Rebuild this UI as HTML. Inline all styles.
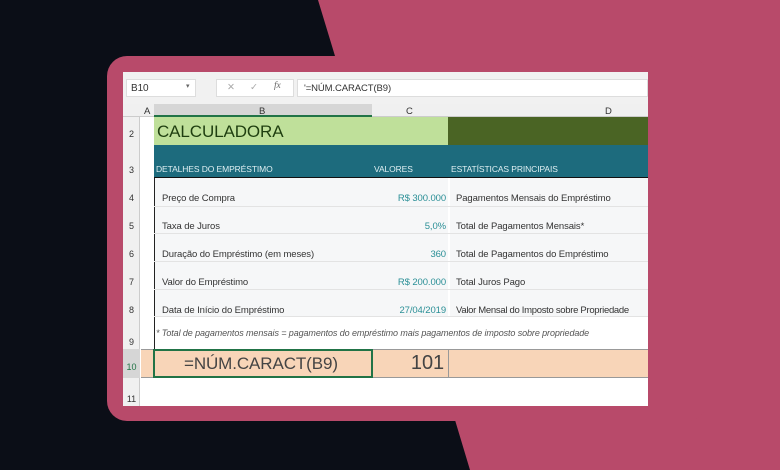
<!DOCTYPE html><html><head><meta charset="utf-8"><style>
*{margin:0;padding:0;box-sizing:border-box}
body{width:780px;height:470px;overflow:hidden;background:#0b0e17;position:relative;font-family:"Liberation Sans",sans-serif}
.a{position:absolute}
.t{position:absolute;font-size:9.5px;color:#333;white-space:nowrap;letter-spacing:-0.1px}
.n{text-align:right;color:#2a8f96}
.rn{position:absolute;left:123px;width:17px;font-size:9px;color:#333;text-align:center}
.hl{position:absolute;left:154px;width:494px;height:1px;background:#e3e3e3}
</style></head><body>
<svg class="a" style="left:0;top:0" width="780" height="470"><polygon points="318,0 780,0 780,470 470,470 455,420 335,56" fill="#b84a6a"/><rect x="107" y="56" width="600" height="365" rx="20" fill="#b84a6a"/></svg>
<div class="a" style="left:123px;top:72px;width:525px;height:334px;background:#fff"></div>
<div class="a" style="left:123px;top:72px;width:525px;height:32px;background:#f1f1f1"></div>
<div class="a" style="left:126px;top:79px;width:70px;height:18px;background:#fff;border:1px solid #ddd"></div>
<div class="t" style="left:131px;top:83px;font-size:10px">B10</div>
<div class="t" style="left:186px;top:82px;font-size:7px;color:#666">▾</div>
<div class="a" style="left:216px;top:79px;width:78px;height:18px;background:#fff;border:1px solid #ddd"></div>
<div class="t" style="left:227px;top:82px;color:#aaa">✕</div>
<div class="t" style="left:250px;top:82px;color:#aaa">✓</div>
<div class="t" style="left:274px;top:81px;color:#666;font-style:italic;font-family:'Liberation Serif',serif">fx</div>
<div class="a" style="left:297px;top:79px;width:351px;height:18px;background:#fff;border:1px solid #ddd"></div>
<div class="t" style="left:304px;top:83px">'=NÚM.CARACT(B9)</div>
<div class="a" style="left:123px;top:104px;width:525px;height:13px;background:#f0f0f0;border-bottom:1px solid #ccc"></div>
<div class="a" style="left:154px;top:104px;width:218px;height:13px;background:#d6d6d6;border-bottom:2px solid #217346"></div>
<div class="t" style="left:144px;top:106px">A</div>
<div class="t" style="left:259px;top:106px">B</div>
<div class="t" style="left:406px;top:106px">C</div>
<div class="t" style="left:605px;top:106px">D</div>
<div class="a" style="left:123px;top:117px;width:17px;height:289px;background:#f0f0f0;border-right:1px solid #ccc"></div>
<div class="a" style="left:123px;top:349px;width:17px;height:29px;background:#d6d6d6"></div>
<div class="a" style="left:154px;top:117px;width:1px;height:232px;background:#222"></div>
<div class="a" style="left:154px;top:117px;width:294px;height:28px;background:#bfe09a"></div>
<div class="a" style="left:448px;top:117px;width:200px;height:28px;background:#4a6424"></div>
<div class="t" style="left:157px;top:122px;font-size:17px;color:#1f3f10">CALCULADORA</div>
<div class="a" style="left:154px;top:145px;width:494px;height:33px;background:#1d6b7d;border-bottom:1px solid #111"></div>
<div class="t" style="left:156px;top:164px;font-size:8.5px;color:#dfeff2">DETALHES DO EMPRÉSTIMO</div>
<div class="t" style="left:374px;top:164px;font-size:8.5px;color:#dfeff2">VALORES</div>
<div class="t" style="left:451px;top:164px;font-size:8.5px;color:#dfeff2">ESTATÍSTICAS PRINCIPAIS</div>
<div class="a" style="left:155px;top:178px;width:493px;height:138px;background:#f6f7f8"></div>
<div class="a" style="left:448px;top:178px;width:2px;height:138px;background:#fff"></div>
<div class="hl" style="top:206px"></div><div class="hl" style="top:233px"></div><div class="hl" style="top:261px"></div><div class="hl" style="top:289px"></div><div class="hl" style="top:316px"></div>
<div class="t" style="left:162px;top:193px">Preço de Compra</div><div class="t n" style="left:372px;width:74px;top:193px">R$ 300.000</div><div class="t" style="left:456px;top:193px">Pagamentos Mensais do Empréstimo</div>
<div class="t" style="left:162px;top:221px">Taxa de Juros</div><div class="t n" style="left:372px;width:74px;top:221px">5,0%</div><div class="t" style="left:456px;top:221px">Total de Pagamentos Mensais*</div>
<div class="t" style="left:162px;top:249px">Duração do Empréstimo (em meses)</div><div class="t n" style="left:372px;width:74px;top:249px">360</div><div class="t" style="left:456px;top:249px">Total de Pagamentos do Empréstimo</div>
<div class="t" style="left:162px;top:277px">Valor do Empréstimo</div><div class="t n" style="left:372px;width:74px;top:277px">R$ 200.000</div><div class="t" style="left:456px;top:277px">Total Juros Pago</div>
<div class="t" style="left:162px;top:305px">Data de Início do Empréstimo</div><div class="t n" style="left:372px;width:74px;top:305px">27/04/2019</div><div class="t" style="left:456px;top:305px;letter-spacing:-0.3px">Valor Mensal do Imposto sobre Propriedade</div>
<div class="t" style="left:156px;top:328px;font-size:9px;font-style:italic;color:#555">* Total de pagamentos mensais = pagamentos do empréstimo mais pagamentos de imposto sobre propriedade</div>
<div class="a" style="left:141px;top:349px;width:507px;height:29px;background:#f8d5b8;border-top:1px solid #999;border-bottom:1px solid #999"></div>
<div class="a" style="left:448px;top:349px;width:1px;height:29px;background:#999"></div>
<div class="a" style="left:153px;top:349px;width:220px;height:29px;border:2px solid #217346"></div>
<div class="t" style="left:184px;top:354px;font-size:17px;color:#444">=NÚM.CARACT(B9)</div>
<div class="t" style="left:372px;width:72px;top:352px;font-size:20px;color:#444;text-align:right">101</div>
<div class="rn" style="top:129px">2</div><div class="rn" style="top:165px">3</div><div class="rn" style="top:193px">4</div><div class="rn" style="top:221px">5</div><div class="rn" style="top:249px">6</div><div class="rn" style="top:277px">7</div><div class="rn" style="top:305px">8</div><div class="rn" style="top:337px">9</div><div class="rn" style="top:362px;color:#217346">10</div><div class="rn" style="top:394px">11</div>
</body></html>
